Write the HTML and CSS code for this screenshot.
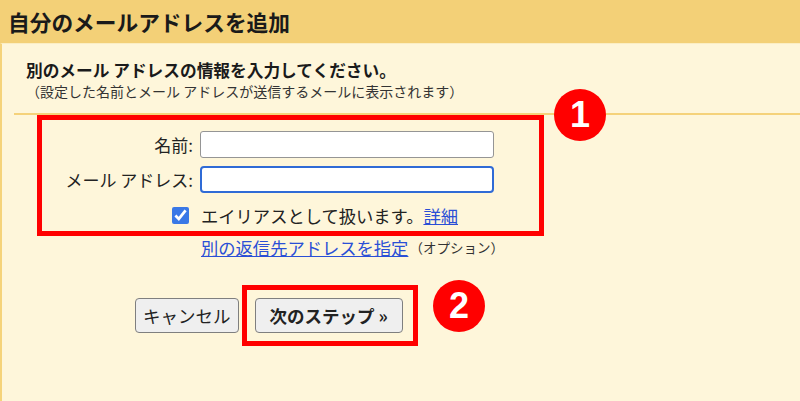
FILE: index.html
```html
<!DOCTYPE html>
<html lang="ja">
<head>
  <meta charset="UTF-8" />
  <title>自分のメールアドレスを追加</title>
  <link rel="stylesheet" href="styles.css">
</head>
<body>

<header class="topbar">
  <h1>自分のメールアドレスを追加</h1>
</header>

<main class="panel">
  <div class="intro">
    <h2>別のメール アドレスの情報を入力してください。</h2>
    <p class="note">（設定した名前とメール アドレスが送信するメールに表示されます）</p>
  </div>

  <section class="fields">
    <div class="row">
      <label for="name">名前:</label>
      <input type="text" id="name" />
    </div>
    <div class="row">
      <label for="addr">メール アドレス:</label>
      <input type="text" id="addr" class="focused" />
    </div>
    <div class="row check">
      <input type="checkbox" id="alias" checked />
      <span>エイリアスとして扱います。<a href="#">詳細</a></span>
    </div>
    <div class="row reply">
      <a href="#">別の返信先アドレスを指定</a><span class="opt">（オプション）</span>
    </div>

    <div class="actions">
      <button type="button">キャンセル</button>
      <button type="button" class="next">次のステップ »</button>
    </div>
  </section>

  <!-- annotations drawn over the form -->
  <div class="mark box-one"></div>
  <div class="mark box-two"></div>
  <div class="badge badge-one">1</div>
  <div class="badge badge-two">2</div>
</main>

</body>
</html>
```

FILE: styles.css
```css
body {
  margin: 0;
  background-color: #fef6da;
  color: #222;
  font-family: "Noto Sans CJK JP", "Noto Sans", sans-serif;
  height: 401px;
  overflow: hidden;
}
.topbar {
  background-color: #f3d077;
  height: 43px;
  display: flex;
  align-items: center;
  padding-left: 8px;
}
.topbar h1 {
  margin: 0;
  font-size: 21.7px;
  font-weight: bold;
  color: #1a1a1a;
}
.panel {
  position: relative;
  border-left: 2px solid #f5d37a;
  border-top: 1px solid #fbeec4;
  height: 357px;
}
.intro {
  padding: 15px 0 0 24px;
  margin-bottom: 12px;
}
.intro h2 {
  margin: 0;
  font-size: 16.7px;
  line-height: 22px;
  font-weight: bold;
  color: #1a1a1a;
}
.note {
  margin: 0;
  font-size: 14px;
  line-height: 20px;
  color: #333;
}
.fields {
  margin-left: 12px;
  border-top: 2px solid #f5d27a;
  padding-top: 16px;
}
.row {
  display: flex;
  align-items: center;
  margin-bottom: 8px;
}
.row label {
  width: 179px;
  text-align: right;
  font-size: 17px;
  margin-right: 7px;
  color: #222;
  white-space: nowrap;
}
.row input[type="text"] {
  box-sizing: border-box;
  width: 294px;
  height: 27px;
  border: 1.5px solid #959595;
  border-radius: 3px;
  background: #fff;
  padding: 0 6px;
  font-size: 15px;
}
.row input.focused {
  border: 2.5px solid #2f6bd6;
  border-radius: 4px;
}
.check {
  height: 28px;
  margin-top: 7px;
  margin-bottom: 4px;
  padding-left: 158px;
  font-size: 17.3px;
}
.check input {
  width: 17px;
  height: 17px;
  margin: 0 12px 0 0;
  accent-color: #3a78e6;
}
.reply {
  height: 28px;
  padding-left: 187px;
  font-size: 17.3px;
}
a {
  color: #2a4fd6;
  text-decoration: underline;
}
.opt {
  font-size: 13.5px;
  color: #333;
  margin-left: 1px;
}
.actions {
  display: flex;
  gap: 16px;
  padding-left: 121px;
  margin-top: 37px;
}
.actions button {
  height: 35px;
  padding: 0 7px;
  font-family: inherit;
  font-size: 17.5px;
  color: #222;
  background-color: #efefef;
  border: 1px solid #7f7f7f;
  border-radius: 4px;
}
.actions .next {
  font-weight: bold;
  padding: 0 14px;
}
.mark {
  position: absolute;
  border: 5px solid #ff0000;
  box-sizing: border-box;
}
.box-one {
  left: 35px;
  top: 71px;
  width: 507px;
  height: 121px;
}
.box-two {
  left: 240px;
  top: 241px;
  width: 176px;
  height: 61px;
}
.badge {
  position: absolute;
  width: 52px;
  height: 52px;
  border-radius: 50%;
  background-color: #ff0000;
  color: #fff;
  font-family: "Liberation Sans", Arial, sans-serif;
  font-weight: bold;
  font-size: 36px;
  display: flex;
  align-items: center;
  justify-content: center;
}
.badge-one {
  left: 552px;
  top: 45px;
}
.badge-two {
  left: 431px;
  top: 236px;
}
```
